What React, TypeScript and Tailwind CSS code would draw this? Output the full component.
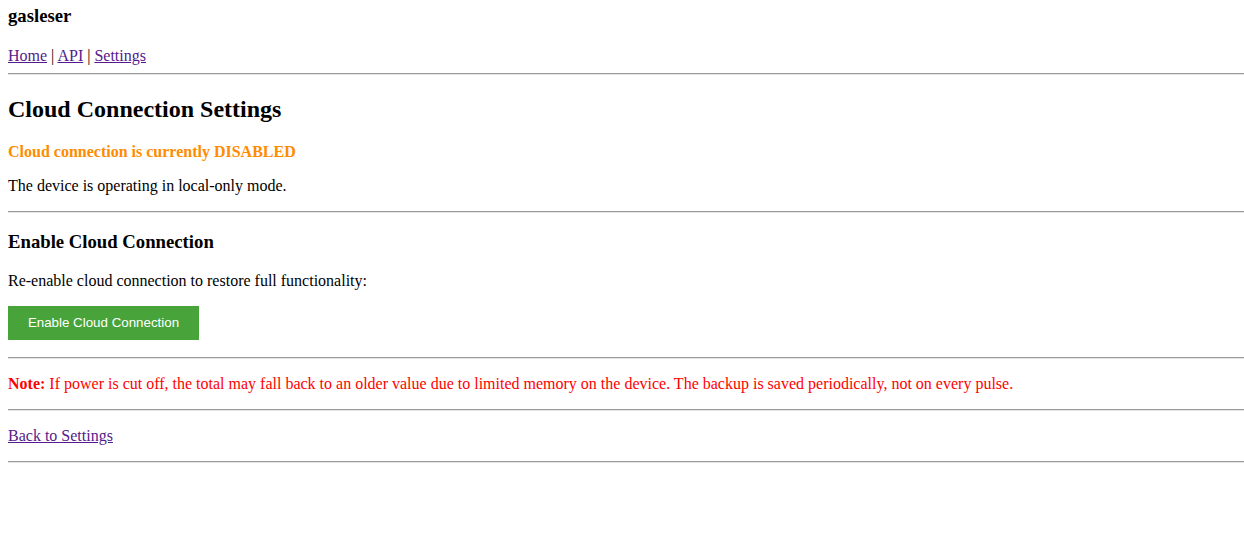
import React from 'react';

function Rule() {
	return <hr className="my-0 h-0 border-0 border-t border-b border-t-[#9a9a9a] border-b-[#e6e6e6]" />;
}

export default function App() {
	return (
		<div className="min-h-screen bg-white pl-2 font-['Liberation_Serif',serif] text-[16px] leading-[normal] text-black">
			<h3 className="m-0 pt-[5px] text-[18.72px] font-bold leading-[normal]">gasleser</h3>

			<p className="mt-[20px] mb-2">
				<a href="#" className="text-[#551a8b] underline">
					Home
				</a>{' '}
				|{' '}
				<a href="#" className="text-[#551a8b] underline">
					API
				</a>{' '}
				|{' '}
				<a href="#" className="text-[#551a8b] underline">
					Settings
				</a>
			</p>
			<Rule />

			<h2 className="mt-[21px] mb-[19.92px] text-[24px] font-bold leading-[normal]">Cloud Connection Settings</h2>
			<p className="mt-[17px] mb-4 font-bold text-[#ff8c00]">Cloud connection is currently DISABLED</p>
			<p className="mt-4 mb-4">The device is operating in local-only mode.</p>
			<Rule />

			<h3 className="mt-[18px] mb-[18.72px] text-[18.72px] font-bold leading-[normal]">Enable Cloud Connection</h3>
			<p className="my-4">Re-enable cloud connection to restore full functionality:</p>
			<form className="mb-[17px]" onSubmit={(e) => e.preventDefault()}>
				<button
					type="submit"
					className="h-[34px] w-[191px] cursor-pointer bg-[#48a33a] font-['Liberation_Sans',Arial,sans-serif] text-[13.33px] text-white"
				>
					Enable Cloud Connection
				</button>
			</form>
			<Rule />

			<p className="my-4 text-[#ff0000]">
				<strong>Note:</strong> If power is cut off, the total may fall back to an older value due to limited memory on
				the device. The backup is saved periodically, not on every pulse.
			</p>
			<Rule />

			<p className="my-4">
				<a href="#" className="text-[#551a8b] underline">
					Back to Settings
				</a>
			</p>
			<Rule />
		</div>
	);
}
